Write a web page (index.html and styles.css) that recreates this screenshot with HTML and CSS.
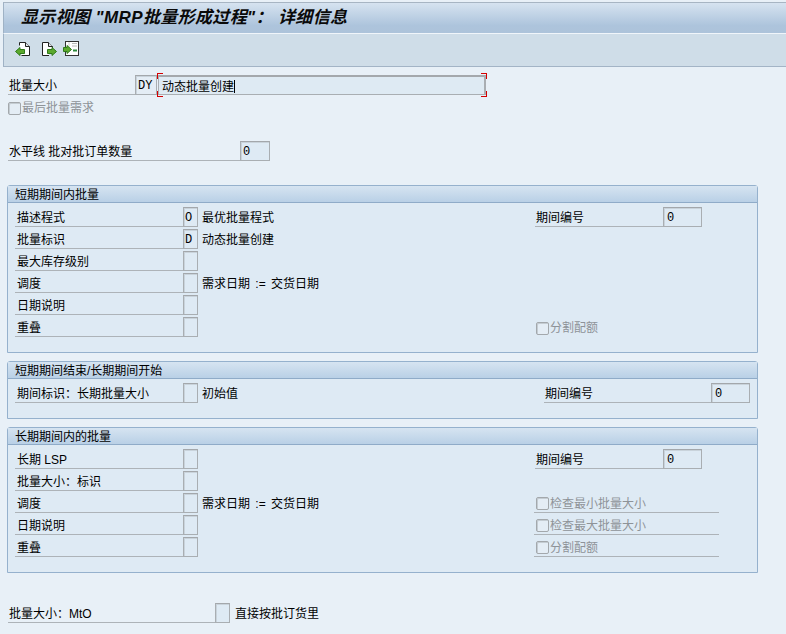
FILE: index.html
```
<!DOCTYPE html>
<html lang="zh">
<head>
<meta charset="utf-8">
<title>显示视图</title>
<link rel="stylesheet" href="styles.css">
</head>
<body>
<div class="screen">
  <header class="titlebar"><h1>显示视图 "MRP批量形成过程"： 详细信息</h1></header>
  <div class="toolbar">
    <button class="tool"><svg width="16" height="16" viewBox="0 0 16 16"><path d="M4.500 4.500V1.500H10.500L14.500 5.500V14.500H6.500" fill="#fff" stroke="#222" stroke-width="1"/><path d="M10.500 1.500V5.500H14.500" fill="#dfe5ea" stroke="#222"/><path d="M0.500 10.500L5 6.500V8.500H9.500V12.500H5V14.500Z" fill="#5ca92e" stroke="#2f7a1a" stroke-width="1"/></svg></button>
    <button class="tool"><svg width="16" height="16" viewBox="0 0 16 16"><path d="M1.500 14.500V1.500H7.500L11.500 5.500V7" fill="#fff" stroke="#222" stroke-width="1"/><path d="M1.500 14.500H8" fill="none" stroke="#222"/><path d="M2 2H7.500L11 5.500V8H8V14H2Z" fill="#fff"/><path d="M7.500 1.500V5.500H11.500" fill="#dfe5ea" stroke="#222"/><path d="M15.500 10.500L11 6.500V8.500H6.500V12.500H11V14.500Z" fill="#5ca92e" stroke="#2f7a1a"/></svg></button>
    <button class="tool"><svg width="16" height="16" viewBox="0 0 16 16"><rect x="2.500" y="0.500" width="13" height="14" fill="#fff" stroke="#333"/><path d="M9 2.500H14M9 5H14" stroke="#bbb" fill="none"/><path d="M6 1V6" stroke="#ccc"/><path d="M10 9.500H14" stroke="#2c8a3c" stroke-width="2" fill="none"/><path d="M8.500 8.500L4 4.500V6.500H0.500V10.500H4V12.500Z" fill="#5ca92e" stroke="#2f7a1a"/></svg></button>
  </div>
  <main class="content">
    <div class="top-row first">
      <span class="label top-label w-127">批量大小</span>
      <span class="field mono w-22">DY</span>
      <span class="edit">动态批量创建<i class="caret"></i><b class="corner c-tl"></b><b class="corner c-bl"></b><b class="corner c-tr"></b><b class="corner c-br"></b></span>
    </div>
    <label class="check top-check"><span class="box"></span>最后批量需求</label>
    <div class="top-row horizon">
      <span class="label top-label w-232">水平线 批对批订单数量</span>
      <span class="field w-30">0</span>
    </div>

    <section class="group g1">
      <h2>短期期间内批量</h2>
      <div class="rows rows-1">
        <div class="row"><span class="label">描述程式</span><span class="field">O</span><span class="desc">最优批量程式</span><span class="label rl">期间编号</span><span class="field w-39">0</span></div>
        <div class="row"><span class="label">批量标识</span><span class="field">D</span><span class="desc">动态批量创建</span></div>
        <div class="row"><span class="label">最大库存级别</span><span class="field"></span></div>
        <div class="row"><span class="label">调度</span><span class="field"></span><span class="desc">需求日期 := 交货日期</span></div>
        <div class="row"><span class="label">日期说明</span><span class="field"></span></div>
        <div class="row"><span class="label">重叠</span><span class="field"></span><span class="desc"></span><label class="check rc"><span class="box"></span>分割配额</label></div>
      </div>
    </section>

    <section class="group g2">
      <h2>短期期间结束/长期期间开始</h2>
      <div class="rows rows-2">
        <div class="row"><span class="label">期间标识：长期批量大小</span><span class="field"></span><span class="desc">初始值</span><span class="label rl">期间编号</span><span class="field w-39">0</span></div>
      </div>
    </section>

    <section class="group g3">
      <h2>长期期间内的批量</h2>
      <div class="rows rows-1">
        <div class="row"><span class="label">长期 LSP</span><span class="field"></span><span class="desc"></span><span class="label rl">期间编号</span><span class="field w-39">0</span></div>
        <div class="row"><span class="label">批量大小：标识</span><span class="field"></span></div>
        <div class="row"><span class="label">调度</span><span class="field"></span><span class="desc">需求日期 := 交货日期</span><label class="check rc lined"><span class="box"></span>检查最小批量大小</label></div>
        <div class="row"><span class="label">日期说明</span><span class="field"></span><span class="desc"></span><label class="check rc lined"><span class="box"></span>检查最大批量大小</label></div>
        <div class="row"><span class="label">重叠</span><span class="field"></span><span class="desc"></span><label class="check rc lined"><span class="box"></span>分割配额</label></div>
      </div>
    </section>

    <div class="top-row bottom">
      <span class="label w-207">批量大小：MtO</span>
      <span class="field"></span>
      <span class="desc after">直接按批订货里</span>
    </div>
  </main>
</div>
</body>
</html>
```
FILE: styles.css
```
* { box-sizing: border-box; }
html, body { margin: 0; padding: 0; height: 100%; }
body {
  background: #e8f0f7;
  color: #000;
  font: 12px/20px "Liberation Sans", "Noto Sans CJK SC", sans-serif;
  overflow: hidden;
}
.screen { width: 786px; height: 634px; display: flex; flex-direction: column; padding-top: 2px; background: #e8f0f7; }
.titlebar {
  height: 31px;
  margin-left: 3px;
  border-top: 1px solid #a7b5c3;
  border-left: 1px solid #9fb2c5;
  background: linear-gradient(#d6e3f0, #adc4dc 75%, #adc3da);
  padding-left: 17px;
}
.titlebar h1 {
  margin: 0;
  font-size: 17px;
  line-height: 29px;
  letter-spacing: 0.37px;
  font-weight: bold;
  font-style: italic;
  color: #0a0a0a;
  white-space: nowrap;
}
.toolbar {
  height: 34px;
  margin-left: 3px;
  border-top: 1px solid #f0f5fa;
  border-left: 1px solid #9fb2c5;
  border-bottom: 1px solid #a3b4c6;
  background: #cfdde8;
  display: flex;
  align-items: flex-start;
  padding: 7px 0 0 11px;
  gap: 6px;
}
.tool { width: 16px; height: 16px; padding: 0; border: 0; background: none; display: block; }
.tool + .tool { margin-left: 4px; }
.tool + .tool + .tool { margin-left: 0; }
.content { flex: 1; padding: 6px 0 0 8px; }
.top-row { display: flex; height: 22px; align-items: flex-end; }
.label {
  display: block;
  height: 22px;
  line-height: 27px;
  padding-left: 2px;
  border-bottom: 1px solid #adb3b8;
  white-space: nowrap;
}
.top-label, .bottom .label { padding-left: 1px; }
.field {
  display: block;
  width: 15px;
  height: 20px;
  flex: none;
  line-height: 20px;
  padding-left: 1px;
  font-family: "Liberation Mono", monospace;
  font-size: 12px;
  border: 1px solid #a9aeb2;
  border-top-color: #a3a7ab;
  background: #deeaf4;
  box-shadow: inset 1px 1px 0 #c9d3db;
}
.w-127 { width: 127px; }
.w-232 { width: 232px; }
.w-207 { width: 207px; }
.w-22 { width: 22px; padding-left: 2px; }
.w-30 { width: 30px; padding-left: 2px; }
.w-39 { width: 39px; padding-left: 3px; }
.mono { background: #e4edf5; }
.edit {
  position: relative;
  display: block;
  width: 328px;
  height: 20px;
  margin-left: 1px;
  padding-left: 3px;
  line-height: 18px;
  border: 1px solid #a9aeb2;
  border-top: 2px solid #a4a8ac;
  border-right: 2px solid #a9aeb2;
  background: #deeaf3;
  font-family: "Noto Sans CJK SC", sans-serif;
}
.caret { display: inline-block; width: 1px; height: 13px; background: #000; vertical-align: -2px; }
.corner { position: absolute; width: 6px; height: 6px; border: 0 solid #d40000; }
.c-tl { left: -2px; top: -4px; border-width: 1px 0 0 1px; }
.c-bl { left: -2px; bottom: -3px; border-width: 0 0 1px 1px; }
.c-tr { right: -3px; top: -4px; border-width: 1px 1px 0 0; }
.c-br { right: -3px; bottom: -3px; border-width: 0 1px 1px 0; }
.check { display: flex; align-items: center; color: #8e9398; white-space: nowrap; line-height: 20px; }
.box {
  width: 13px;
  height: 13px;
  margin-right: 1px;
  border: 1px solid #a3a8ac;
  border-radius: 2px;
  box-shadow: inset 1px 1px 0 #c4ccd2;
  background: #e4edf5;
  flex: none;
}
.top-check { height: 24px; padding-top: 2px; }
.horizon { margin-top: 20px; }
.group {
  width: 751px;
  margin-left: -1px;
  border: 1px solid #95b1cd;
  border-top-left-radius: 3px;
  border-top-right-radius: 3px;
  background: #deeaf4;
}
.group h2 {
  margin: 0;
  height: 17px;
  padding-left: 7px;
  font-size: 12px;
  font-weight: normal;
  line-height: 18px;
  border-bottom: 1px solid #8fabc8;
  background: linear-gradient(#d6e4f1, #b9d0e6);
}
.g1 { margin-top: 24px; height: 168px; }
.g2 { margin-top: 8px; height: 58px; }
.g3 { margin-top: 8px; height: 146px; }
.rows { padding: 2px 0 0 7px; }
.row { display: grid; height: 22px; align-items: end; }
.rows-1 .row { grid-template-columns: 168px 15px 337px 128px 39px; }
.rows-2 .row { grid-template-columns: 168px 15px 346px 167px 39px; }
.desc { padding-left: 4px; height: 22px; line-height: 27px; white-space: nowrap; word-spacing: 2px; }
.rl { grid-column: 4; padding-left: 1px; }
.rc { grid-column: 4 / 6; height: 22px; padding: 4px 0 0 1px; }
.lined { border-bottom: 1px solid #adb3b8; width: 185px; margin-left: -1px; padding-left: 2px; }
.bottom { margin-top: 28px; }
.after { padding-left: 5px; }
```
